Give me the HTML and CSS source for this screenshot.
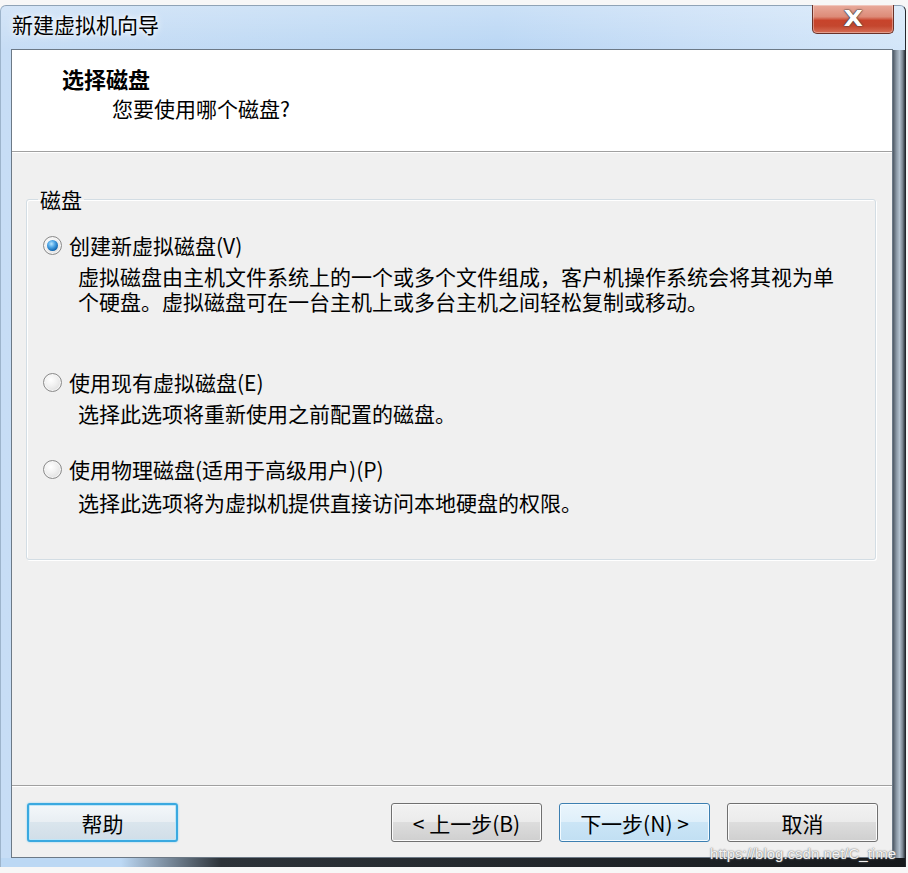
FILE: index.html
```html
<!DOCTYPE html>
<html lang="zh-CN">
<head>
<meta charset="utf-8">
<title>新建虚拟机向导</title>
<link rel="stylesheet" href="styles.css">
</head>
<body>
<div class="window">
  <div class="titlebar">
    <div class="title">新建虚拟机向导</div>
    <div class="close"><span>X</span></div>
  </div>
  <div class="client">
    <div class="header">
      <div class="h-title">选择磁盘</div>
      <div class="h-sub">您要使用哪个磁盘?</div>
    </div>
    <div class="main">
      <fieldset class="group">
        <legend>磁盘</legend>
        <div class="option opt1">
          <div class="opt-row"><span class="radio checked"></span><span>创建新虚拟磁盘(V)</span></div>
          <div class="desc">
            <div>虚拟磁盘由主机文件系统上的一个或多个文件组成，客户机操作系统会将其视为单</div>
            <div>个硬盘。虚拟磁盘可在一台主机上或多台主机之间轻松复制或移动。</div>
          </div>
        </div>
        <div class="option opt2">
          <div class="opt-row"><span class="radio"></span><span>使用现有虚拟磁盘(E)</span></div>
          <div class="desc">选择此选项将重新使用之前配置的磁盘。</div>
        </div>
        <div class="option opt3">
          <div class="opt-row"><span class="radio"></span><span>使用物理磁盘(适用于高级用户)(P)</span></div>
          <div class="desc">选择此选项将为虚拟机提供直接访问本地硬盘的权限。</div>
        </div>
      </fieldset>
    </div>
    <div class="footer">
      <button class="btn btn-focus">帮助</button>
      <button class="btn btn-back">&lt; 上一步(B)</button>
      <button class="btn btn-default">下一步(N) &gt;</button>
      <button class="btn">取消</button>
    </div>
  </div>
  <div class="watermark">https://blog.csdn.net/C_time</div>
</div>
</body>
</html>
```
FILE: styles.css
```css
html, body {
  margin: 0;
  padding: 0;
}
body {
  background: #f7f7f7;
  font-family: "Noto Sans CJK SC", "Noto Sans", sans-serif;
  color: #000;
  width: 908px;
  height: 873px;
  overflow: hidden;
}
.window {
  position: relative;
  margin-top: 5px;
  width: 906px;
  height: 862px;
  box-sizing: border-box;
  border-top: 1px solid #8fa3b6;
  border-left: 1px solid #9db4cb;
  border-right: 1px solid #23292f;
  border-radius: 6px 6px 0 0;
  display: flex;
  flex-direction: column;
  background:
    linear-gradient(to right, #bcd8f4 0, #bcd8f4 120px, #2d3339 220px, #16191c 100%) left bottom / 100% 9px no-repeat,
    linear-gradient(to right, #4e5965 0, #8d9aa7 30%, #b3c1ce 55%, #7a8691 80%, #2f363d 100%) right 44px / 12px 100% no-repeat,
    linear-gradient(to bottom, rgba(255,255,255,0.25), rgba(255,255,255,0) 44px),
    linear-gradient(to right, #c7ddf5 0%, #bed9f4 35%, #b9d6f4 55%, #c6ddf6 75%, #d3e6f9 100%);
}
.titlebar {
  height: 43px;
  display: flex;
  justify-content: space-between;
  align-items: flex-start;
  flex: none;
}
.title {
  padding: 6px 0 0 11px;
  font-size: 21px;
  line-height: 24px;
  text-shadow: 0 0 8px #fff, 0 0 4px #fff;
}
.close {
  margin: -1px 11px 0 0;
  width: 82px;
  height: 29px;
  box-sizing: border-box;
  border: 1px solid #6a3229;
  border-top: none;
  border-radius: 0 0 5px 5px;
  background: linear-gradient(to bottom, #e9ab9c 0%, #dd8b78 42%, #c8432b 55%, #c4462e 75%, #d66f57 100%);
  box-shadow: inset 0 0 0 1px rgba(255,255,255,0.35);
  display: flex;
  justify-content: center;
  align-items: center;
}
.close span {
  font-family: "DejaVu Sans", sans-serif;
  font-weight: bold;
  font-size: 21px;
  line-height: 21px;
  color: #fff;
  transform: scaleX(1.2);
  text-shadow: 0 0 1px #333, 0 0 1px #333, 0 0 2px #555;
}
.client {
  flex: 1;
  margin: 0 12px 9px 10px;
  border: 1px solid #6c7986;
  background: #f0f0f0;
  display: flex;
  flex-direction: column;
}
.header {
  height: 102px;
  box-sizing: border-box;
  background: #fff;
  border-bottom: 1px solid #a0a0a0;
  padding: 16px 0 0 50px;
  flex: none;
}
.h-title {
  font-size: 22px;
  font-weight: bold;
  line-height: 24px;
}
.h-sub {
  margin: 6px 0 0 50px;
  font-size: 21px;
  line-height: 24px;
}
.main {
  flex: 1;
  border-top: 1px solid #fff;
  padding: 34px 16px 0 14px;
}
.group {
  margin: 0;
  min-width: 0;
  height: 373px;
  box-sizing: border-box;
  border: 1px solid #d3dde4;
  border-radius: 3px;
  box-shadow: inset 1px 1px 0 #fff, 1px 1px 0 #fff;
  padding: 22px 16px 0 16px;
}
.group legend {
  margin-left: -5px;
  padding: 0 2px;
  font-size: 21px;
  line-height: 24px;
}
.option {
  font-size: 21px;
}
.opt2 {
  margin-top: 56px;
}
.opt3 {
  margin-top: 31px;
}
.opt-row {
  display: flex;
  align-items: center;
  gap: 7px;
  line-height: 24px;
}
.radio {
  width: 19px;
  height: 19px;
  box-sizing: border-box;
  border-radius: 50%;
  border: 1px solid #8a8a8a;
  background: radial-gradient(circle at 40% 35%, #ffffff 0%, #f1f1f1 40%, #d5d5d5 100%);
  box-shadow: inset 0 0 0 1px #f6f6f6;
  display: flex;
  justify-content: center;
  align-items: center;
  flex: none;
}
.radio.checked::after {
  content: "";
  width: 11px;
  height: 11px;
  border-radius: 50%;
  background: radial-gradient(circle at 40% 35%, #b9e6ff 0%, #4fa6e6 35%, #1369b3 70%, #0c4a85 100%);
}
.desc {
  margin: 7px 0 0 35px;
  line-height: 25px;
  white-space: nowrap;
}
.opt3 .desc {
  margin-top: 9px;
}
.footer {
  height: 72px;
  box-sizing: border-box;
  border-top: 1px solid #a0a0a0;
  box-shadow: inset 0 1px 0 #fff;
  padding: 17px 14px 0 15px;
  display: flex;
  align-items: flex-start;
  gap: 17px;
  flex: none;
}
.btn {
  width: 151px;
  height: 39px;
  box-sizing: border-box;
  margin: 0;
  padding: 0;
  border: 1px solid #707070;
  border-radius: 3px;
  background: linear-gradient(to bottom, #f2f2f2 0%, #ebebeb 50%, #dddddd 50%, #cfcfcf 100%);
  box-shadow: inset 0 0 0 1px #fbfbfb;
  font-family: "Noto Sans CJK SC", "Noto Sans", sans-serif;
  font-size: 21px;
  line-height: 36px;
  color: #000;
}
.btn-focus {
  border: 2px solid #3aa9e0;
  background: linear-gradient(to bottom, #f3f7fa 0%, #e8eef3 50%, #dae5ed 50%, #d1dee8 100%);
  box-shadow: inset 0 0 0 1px #bfe6f8, 0 0 2px #7fcff3;
}
.btn-back {
  margin-left: auto;
}
.btn-default {
  border-color: #3c7fb1;
  background: linear-gradient(to bottom, #eaf5fc 0%, #deeffa 50%, #cbe5f6 50%, #c1dff3 100%);
  box-shadow: inset 0 0 0 1px #f4fbff;
}
.watermark {
  position: absolute;
  right: 9px;
  bottom: 5px;
  font-family: "Liberation Sans", sans-serif;
  font-size: 15px;
  line-height: 17px;
  color: rgba(255,255,255,0.92);
  text-shadow: 0 0 1px #777, 0 0 2px #888;
}
```
